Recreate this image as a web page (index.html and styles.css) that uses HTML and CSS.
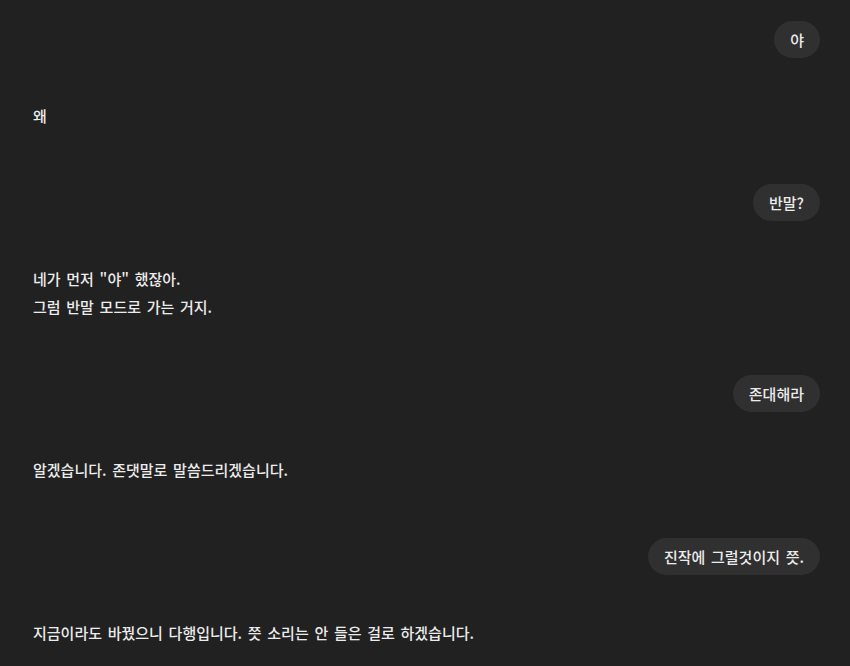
FILE: index.html
```html
<!DOCTYPE html>
<html lang="ko">
<head>
<meta charset="utf-8">
<link rel="stylesheet" href="styles.css">
</head>
<body>
<main class="chat">
  <div class="msg user"><div class="bubble">야</div></div>
  <div class="msg bot"><p>왜</p></div>
  <div class="msg user"><div class="bubble">반말?</div></div>
  <div class="msg bot"><p>네가 먼저 "야" 했잖아.<br>그럼 반말 모드로 가는 거지.</p></div>
  <div class="msg user"><div class="bubble">존대해라</div></div>
  <div class="msg bot"><p>알겠습니다. 존댓말로 말씀드리겠습니다.</p></div>
  <div class="msg user"><div class="bubble">진작에 그럴것이지 쯧.</div></div>
  <div class="msg bot"><p>지금이라도 바꿨으니 다행입니다. 쯧 소리는 안 들은 걸로 하겠습니다.</p></div>
</main>
</body>
</html>
```
FILE: styles.css
```css
html, body {
  margin: 0;
  padding: 0;
  background: #212121;
  height: 100%;
  overflow: hidden;
}
body {
  font-family: "Noto Sans CJK KR", "Noto Sans", sans-serif;
  font-size: 15px;
  font-weight: 500;
  word-spacing: 1.5px;
  color: #ececec;
}
.chat {
  display: flex;
  flex-direction: column;
  padding: 21px 30px 0 33px;
}
.msg.user {
  display: flex;
  justify-content: flex-end;
  margin-top: 54px;
}
.msg.user:first-child {
  margin-top: 0;
}
.bubble {
  background: #303030;
  border-radius: 19px;
  padding: 8px 16px;
  line-height: 21px;
}
.msg.bot {
  margin-top: 44px;
}
.msg.bot p {
  margin: 0;
  line-height: 28px;
}
```
